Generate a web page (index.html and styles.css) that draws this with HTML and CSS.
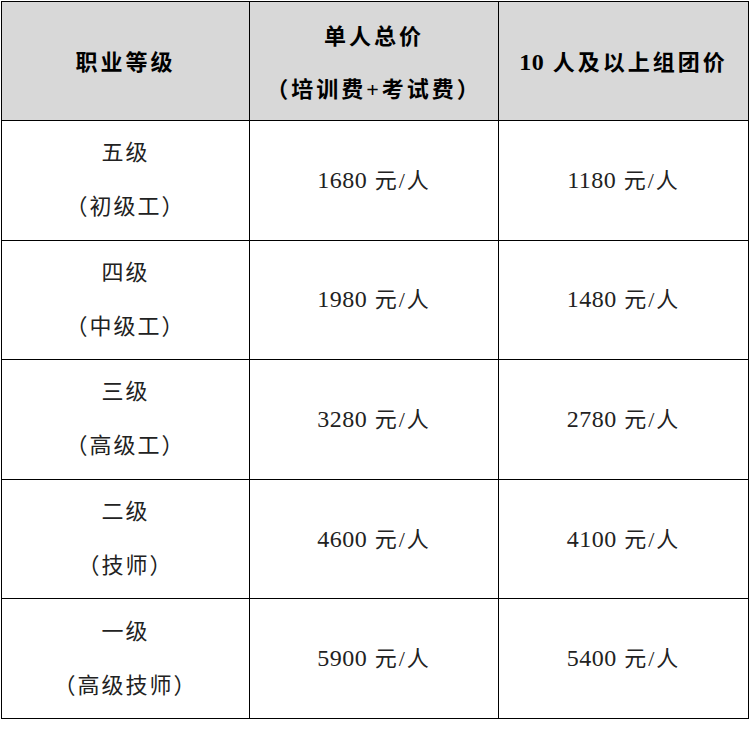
FILE: index.html
```html
<!DOCTYPE html>
<html lang="zh-CN">
<head>
<meta charset="utf-8">
<link rel="stylesheet" href="styles.css">
<title>职业等级价格表</title>
</head>
<body>
<div class="wrap">
<table class="price">
  <colgroup>
    <col class="c1"><col class="c2"><col class="c3">
  </colgroup>
  <thead>
    <tr class="head">
      <th><span class="ln">职业等级</span></th>
      <th><span class="ln">单人总价</span><span class="ln">（培训费+考试费）</span></th>
      <th><span class="ln"><span class="hnum">10</span> 人及以上组团价</span></th>
    </tr>
  </thead>
  <tbody>
    <tr><td><span class="ln">五级</span><span class="ln">（初级工）</span></td><td><span class="num">1680</span> 元/人</td><td><span class="num">1180</span> 元/人</td></tr>
    <tr><td><span class="ln">四级</span><span class="ln">（中级工）</span></td><td><span class="num">1980</span> 元/人</td><td><span class="num">1480</span> 元/人</td></tr>
    <tr><td><span class="ln">三级</span><span class="ln">（高级工）</span></td><td><span class="num">3280</span> 元/人</td><td><span class="num">2780</span> 元/人</td></tr>
    <tr><td><span class="ln">二级</span><span class="ln">（技师）</span></td><td><span class="num">4600</span> 元/人</td><td><span class="num">4100</span> 元/人</td></tr>
    <tr><td><span class="ln">一级</span><span class="ln">（高级技师）</span></td><td><span class="num">5900</span> 元/人</td><td><span class="num">5400</span> 元/人</td></tr>
  </tbody>
</table>
</div>
</body>
</html>
```

FILE: styles.css
```css
html, body {
  margin: 0;
  padding: 0;
  background: #ffffff;
}
.wrap {
  padding: 1px 0 0 1px;
}
.price {
  border-collapse: collapse;
  table-layout: fixed;
  width: 748px;
  font-family: "Liberation Serif", "Noto Sans CJK SC", serif;
  font-size: 22px;
  color: #222222;
}
.c1 { width: 248px; }
.c2 { width: 249px; }
.c3 { width: 250px; }
.price th,
.price td {
  border: 1px solid #000000;
  padding: 0;
  text-align: center;
  vertical-align: middle;
  height: 118.6px;
  letter-spacing: 2px;
  line-height: 54px;
}
.price .head th {
  background: #d8d8d8;
  color: #000000;
  font-weight: bold;
  letter-spacing: 3px;
  line-height: 53px;
  height: 115px;
  padding-top: 3px;
}
.ln {
  display: block;
}
.num {
  font-size: 24px;
  letter-spacing: 0.5px;
}
.hnum {
  font-size: 24px;
  letter-spacing: 0.5px;
}
```
